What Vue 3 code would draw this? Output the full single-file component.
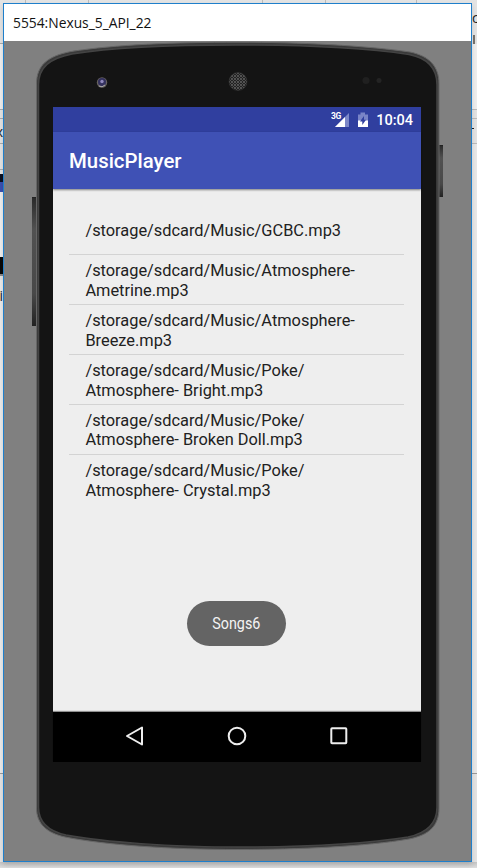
<script setup>
const songs = [
  ['/storage/sdcard/Music/GCBC.mp3'],
  ['/storage/sdcard/Music/Atmosphere-', 'Ametrine.mp3'],
  ['/storage/sdcard/Music/Atmosphere-', 'Breeze.mp3'],
  ['/storage/sdcard/Music/Poke/', 'Atmosphere- Bright.mp3'],
  ['/storage/sdcard/Music/Poke/', 'Atmosphere- Broken Doll.mp3'],
  ['/storage/sdcard/Music/Poke/', 'Atmosphere- Crystal.mp3'],
]
</script>

<template>
  <div class="desktop">
    <svg class="layer" width="477" height="868" viewBox="0 0 477 868">
      <defs>
        <linearGradient id="foot" x1="0" y1="0" x2="0" y2="1">
          <stop offset="0" stop-color="#c4c4c4" /><stop offset="1" stop-color="#dedede" />
        </linearGradient>
      </defs>
      <rect width="477" height="868" fill="#e3e3e3" />
      <path d="M25.500 0V3M88.500 0V3M262.500 0V3M325.500 0V3M416.500 0V3" stroke="#bbb" />
      <rect y="43" width="3" height="66" fill="#eee" />
      <path d="M0 43.500H3M0 109.500H3M0 118.500H3M0 143.500H3M0 169.500H3" stroke="#aaa" />
      <rect y="174" width="3" height="8" fill="#0b1020" />
      <rect y="182" width="3" height="10" fill="#3b4fb0" />
      <rect y="192" width="3" height="65" fill="#eee" />
      <rect y="257" width="3" height="17" fill="#080808" />
      <rect y="274" width="3" height="2" fill="#888" />
      <rect y="280" width="3" height="493" fill="#eaeaea" />
      <rect x="472" y="44" width="5" height="65" fill="#eee" />
      <rect x="473" y="35" width="2" height="9" fill="#77736d" />
      <path d="M472 109.500H477M472 118.500H477M472 143.500H477" stroke="#bbb" />
      <path d="M472 128.500H474" stroke="#222" />
      <rect x="472" y="144" width="5" height="629" fill="#e8e8e8" />
      <path d="M0 773.500H3M472 773.500H477" stroke="#999" />
      <rect y="862" width="477" height="6" fill="url(#foot)" />
    </svg>
    <span class="peek peek-k">x</span>
    <span class="peek peek-i">i</span>
    <span class="peek peek-c">c</span>

    <main class="window">
      <header class="titlebar"><span>5554:Nexus_5_API_22</span></header>
      <section class="stage">
        <svg class="layer device" width="469" height="858" viewBox="3 3 469 858">
          <defs>
            <linearGradient id="key" x1="0" y1="0" x2="0" y2="1">
              <stop offset="0" stop-color="#292929" /><stop offset=".25" stop-color="#515151" />
              <stop offset=".75" stop-color="#484848" /><stop offset="1" stop-color="#222" />
            </linearGradient>
            <pattern id="mesh" width="3" height="3" patternUnits="userSpaceOnUse">
              <rect width="3" height="3" fill="#222" /><circle cx="1" cy="1" r=".9" fill="#686868" />
              <circle cx="2.500" cy="2.500" r=".6" fill="#555" />
            </pattern>
          </defs>
          <rect x="32" y="197" width="5" height="129" fill="url(#key)" />
          <path d="M32 197.500H36M32 325.500H36" stroke="#222" />
          <rect x="438" y="145" width="5" height="52" fill="url(#key)" />
          <path d="M439 145.500H443M439 196.500H443" stroke="#222" />
          <path class="shell" d="M36.500 84C36.500 65 48 56 71 51.500C115 44.500 175 42.200 238 42.200C300 42.200 365 45.500 410 52C429 56 439 66 439 84V808C439 826 429 835 409 839C365 846.500 300 849.500 238 849.500C170 849.500 105 845 65 837C47 833 36.500 824 36.500 808Z" />
          <path class="rim" d="M38.500 85C38.500 67 50 58.500 72 54C115 47 175 45 238 45C300 45 365 48 409 54.500C427 58 437 68 437 85V807C437 824 427 833 408 837C365 844 300 847 238 847C170 847 105 842 66 835C48 831 38.500 822 38.500 807Z" />
          <circle cx="102" cy="82.500" r="5.200" fill="#66625f" />
          <circle cx="102" cy="82" r="4" fill="#34315e" />
          <circle cx="102" cy="81.500" r="1.700" fill="#9089bd" />
          <path d="M99 86Q102 88 105 85" fill="none" stroke="#aaa8ac" />
          <circle cx="238" cy="81.500" r="9" fill="url(#mesh)" stroke="#333" stroke-width=".6" />
          <circle cx="366" cy="80.500" r="3.500" fill="#202020" />
          <circle cx="379" cy="80.500" r="2.500" fill="#242424" />
        </svg>

        <div class="screen">
          <div class="statusbar">
            <svg width="20" height="18" viewBox="0 0 20 18">
              <path d="M18 2V16H4Z" fill="#7c87c8" />
              <path d="M14 6V16H4Z" fill="#fff" />
              <text x="0" y="8">3G</text>
            </svg>
            <svg class="battery" width="12" height="18" viewBox="0 0 12 18">
              <path d="M1 3.500H3.500V1.500H8V3.500H11V10H1Z" fill="#7984c7" />
              <path d="M1 9.500H11V16H1Z" fill="#fff" />
              <path d="M7 5L3 10.500H5.300V14L9 8.800H7Z" fill="#303f9f" />
            </svg>
            <span class="clock">10:04</span>
          </div>
          <div class="appbar"><h1>MusicPlayer</h1></div>
          <div class="content">
            <ul class="songs">
              <li v-for="(song, i) in songs" :key="i">
                <span v-for="line in song" :key="line">{{ line }}</span>
              </li>
            </ul>
            <div class="toast"><span>Songs6</span></div>
          </div>
          <nav class="navbar">
            <svg width="22" height="22" viewBox="0 0 22 22"><path d="M18 2.500V19.500L3 11Z" /></svg>
            <svg width="22" height="22" viewBox="0 0 22 22"><circle cx="11" cy="11" r="8.300" /></svg>
            <svg width="22" height="22" viewBox="0 0 22 22"><rect x="3.300" y="3.300" width="15" height="15" rx=".7" /></svg>
          </nav>
        </div>
      </section>
    </main>
  </div>
</template>

<style>
body { margin: 0; overflow: hidden; }
</style>

<style scoped>
.desktop { position: relative; box-sizing: border-box; width: 477px; height: 868px; padding: 3px 0 0 3px; overflow: hidden; }
.layer { position: absolute; left: 0; top: 0; display: block; }
.peek { position: absolute; overflow: hidden; font: 14px/16px "Open Sans", sans-serif; color: #222; display: flex; justify-content: flex-end; }
.peek-k { left: 0; top: 124px; width: 3px; }
.peek-i { left: 0; top: 288px; width: 3px; }
.peek-c { left: 472px; top: 10px; width: 5px; justify-content: flex-start; }
.window { position: relative; box-sizing: border-box; width: 469px; height: 859px; border: 1px solid #1f7fcb; background: #808080; box-shadow: 0 3px 5px #0002; }
.titlebar { height: 37px; background: #fff; display: flex; align-items: center; padding-left: 9px; font: 14.500px/20px "Open Sans", sans-serif; color: #111; }
.titlebar span { display: block; white-space: nowrap; transform: scaleX(.953); transform-origin: left; }
.stage { height: 820px; padding: 66px 0 0 49px; box-sizing: border-box; }
.device { left: -1px; top: -1px; }
.shell { fill: #3a3a3a; stroke: #666; stroke-width: 1; }
.rim { fill: #141414; stroke: #444; stroke-width: 1.500; }
.screen { position: relative; width: 368px; height: 655px; display: flex; flex-direction: column; font-family: Roboto, sans-serif; background: #eee; }
.statusbar { height: 25px; background: #303f9f; display: flex; align-items: center; justify-content: flex-end; padding-right: 8px; box-sizing: border-box; color: #fff; }
.statusbar text { font: 700 8.500px Roboto, sans-serif; fill: #fff; letter-spacing: -.4px; }
.battery { margin: 0 7px 0 6px; }
.clock { font-size: 14.500px; font-weight: 500; line-height: 25px; padding-top: 2px; }
.appbar { height: 57px; background: #3f51b5; box-shadow: 0 1px 2px #0007; display: flex; align-items: center; padding-left: 16px; }
h1 { margin: 0; padding-top: 1px; font-size: 20.400px; font-weight: 500; line-height: 24px; color: #fff; }
.content { flex: 1; display: flex; flex-direction: column; align-items: center; justify-content: space-between; padding: 16px 17px 66px 16px; }
.songs { list-style: none; margin: 0; padding: 0; width: 100%; }
.songs li { box-sizing: border-box; height: 49.900px; border-bottom: 1px solid #d3d3d3; padding: 2px 0 0 16.400px; display: flex; flex-direction: column; justify-content: center; font-size: 16.370px; line-height: 19.500px; color: #212121; white-space: nowrap; }
.songs li:first-child { height: 50.300px; padding-top: 3px; }
.songs li:last-child { border-bottom: 0; }
.toast { width: 99px; height: 45px; border-radius: 23px; background: #646464; color: #f4f4f4; display: flex; align-items: center; justify-content: center; font-size: 16.300px; }
.toast span { transform: scaleX(.88); }
.navbar { height: 50px; padding-bottom: 2px; box-sizing: border-box; background: #000; display: flex; justify-content: center; align-items: center; gap: 80px; box-shadow: 0 -1px 1px #0006; }
.navbar svg { fill: none; stroke: #eee; stroke-width: 2; stroke-linejoin: round; }
</style>
